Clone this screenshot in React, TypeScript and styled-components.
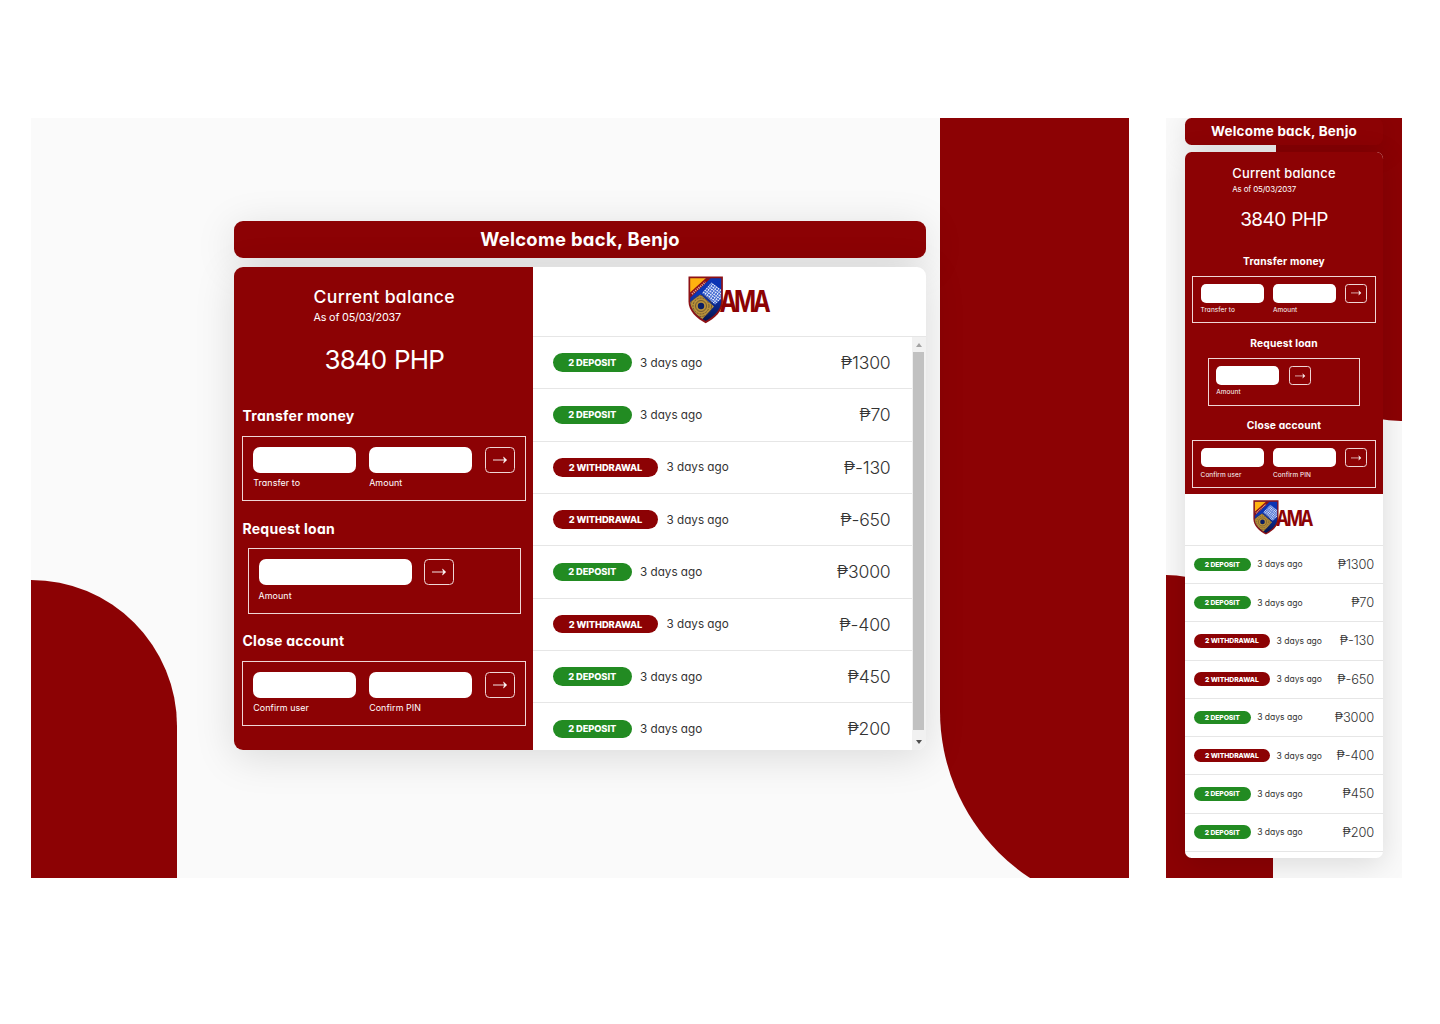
import React from "react";
import styled, { createGlobalStyle, css, ThemeProvider } from "styled-components";

const RED = "#8c0204";

const GlobalStyle = createGlobalStyle`
  * { box-sizing: border-box; }
  body {
    margin: 0;
    background: #fff;
    font-family: Inter, "Open Sans", "Liberation Sans", sans-serif;
    font-feature-settings: "cv11" 1;
  }
`;

interface Sizing {
  scale: number;
  compact: boolean;
}

type Themed = { theme: any };

/* Scales a desktop length to the device being shown. */
const u = (n: number) => ({ theme }: Themed) => `${+(n * (theme as Sizing).scale).toFixed(2)}px`;
const pick = (wide: string, compact: string) => ({ theme }: Themed) =>
  (theme as Sizing).compact ? compact : wide;

const Page = styled.main`
  display: flex;
  align-items: flex-start;
  width: 1440px;
  height: 1024px;
  padding: 118px 0 0 31px;
  gap: 37px;
  overflow: hidden;
`;

const Screen = styled.section`
  position: relative;
  flex: none;
  width: ${pick("1098px", "235.5px")};
  height: 760px;
  padding: ${pick("103px 0 0 203px", "0.4px 0 0 19px")};
  overflow: hidden;
  background: #fafafa;
`;

const CornerLeft = styled.div`
  position: absolute;
  left: 0;
  bottom: 0;
  width: ${pick("146px", "107px")};
  height: ${pick("298px", "303.5px")};
  border-top-right-radius: ${pick("146px", "107px")};
  background: ${RED};
`;

const CornerRight = styled.div`
  position: absolute;
  top: 0;
  left: ${pick("909.4px", "110px")};
  width: ${pick("400px", "250px")};
  height: ${pick("793px", "303px")};
  border-bottom-left-radius: ${pick("200px", "125px")};
  background: ${RED};
`;

const Dashboard = styled.div`
  position: relative;
  display: flex;
  flex-direction: column;
  gap: ${pick("8.5px", "6.5px")};
  width: ${pick("692px", "198px")};
`;

const raised = css`
  border-radius: ${u(9)};
  box-shadow: 0 ${u(7)} ${u(40)} rgba(0, 0, 0, 0.13);
`;

const Greeting = styled.header`
  ${raised}
  height: ${u(37)};
  background: ${RED};
  color: #fff;
  font-size: ${u(18.4)};
  font-weight: 700;
  letter-spacing: 0.017em;
  line-height: ${u(37)};
  text-align: center;
`;

const Card = styled.div`
  ${raised}
  position: relative;
  display: flex;
  flex-direction: ${pick("row", "column")};
  height: ${pick("483.5px", "706.5px")};
  overflow: hidden;
  background: #fff;
`;

const Panel = styled.div`
  display: flex;
  flex-direction: column;
  align-items: center;
  flex: none;
  width: ${pick("299px", "100%")};
  height: ${pick("100%", "342px")};
  padding: ${pick("20.5px 0 0 1.5px", "15px 0 0")};
  background: ${RED};
  color: #fff;
`;

const BalanceTitle = styled.h2`
  margin: 0;
  font-size: ${u(17.6)};
  font-weight: 500;
  letter-spacing: 0.018em;
  line-height: ${u(20)};
`;

const BalanceDate = styled.p`
  margin: ${u(3.5)} 0 0;
  font-size: ${u(10.8)};
  letter-spacing: -0.018em;
  line-height: ${u(14)};
`;

const BalanceValue = styled.p`
  margin: ${u(18.5)} 0 ${u(11.5)};
  font-size: ${u(26)};
  letter-spacing: -0.033em;
  word-spacing: 0.05em;
  line-height: ${u(34)};
`;

const Operation = styled.section`
  display: flex;
  flex-direction: column;
  align-items: center;
  align-self: stretch;
  padding: ${u(17.5)} ${u(7)} 0;
`;

const OperationTitle = styled.h3`
  align-self: ${pick("flex-start", "center")};
  margin: 0 0 ${u(9.5)};
  font-size: ${u(14)};
  font-weight: 700;
  letter-spacing: 0.018em;
  line-height: ${u(20)};
`;

const Form = styled.div<{ $single?: boolean }>`
  display: flex;
  align-items: flex-start;
  gap: ${u(12.9)};
  width: ${p => (p.$single ? pick("273.5px", "152px")(p) : pick("284px", "183.5px")(p))};
  height: ${u(65.5)};
  padding: ${u(10)};
  border: 1px solid #efd6d6;
`;

const Field = styled.label<{ $wide?: boolean }>`
  display: flex;
  flex-direction: column;
  gap: ${u(4.5)};
  width: ${p => (p.$wide ? pick("153px", "63px")(p) : pick("103px", "63px")(p))};
  font-size: ${u(8.9)};
  letter-spacing: 0.01em;
  line-height: ${u(12)};
`;

const Input = styled.input`
  width: 100%;
  height: ${u(26)};
  padding: 0;
  border: 0;
  border-radius: ${u(7)};
  background: #fff;
`;

const Submit = styled.button`
  display: grid;
  place-items: center;
  width: ${u(30)};
  height: ${u(26)};
  padding: 0;
  border: 1px solid #efd6d6;
  border-radius: ${u(4.5)};
  background: none;
  color: #fff;

  svg { width: ${u(14)}; height: ${u(8)}; overflow: visible; }
`;

const Activity = styled.div`
  display: flex;
  flex-direction: column;
  flex: 1;
  min-width: 0;
`;

const Brand = styled.div`
  display: flex;
  justify-content: center;
  flex: none;
  height: ${pick("70.5px", "51.8px")};
  padding-top: ${pick("9px", "6px")};
  border-bottom: 1px solid #e6e6e6;

  svg { width: ${u(84)}; height: ${u(48)}; }
`;

const Scroller = styled.div`
  display: flex;
  flex: 1;
  min-height: 0;
  overflow: hidden;
`;

const Rows = styled.ul`
  flex: 1;
  margin: 0;
  padding: 0;
  list-style: none;
`;

const Row = styled.li`
  display: flex;
  align-items: center;
  height: ${u(52.32)};
  padding: ${pick("0 21px 0 20px", "0 9px 0 8.5px")};
  border-bottom: 1px solid #e6e6e6;
  color: #333;
`;

const Badge = styled.span<{ $credit: boolean }>`
  display: flex;
  align-items: center;
  justify-content: center;
  width: ${p => u(p.$credit ? 78.5 : 105)(p)};
  height: ${u(18.5)};
  margin-right: ${u(8.5)};
  border-radius: ${u(10)};
  background: ${p => (p.$credit ? "#228b22" : RED)};
  color: #fff;
  font-size: ${u(9.3)};
  font-weight: 800;
  letter-spacing: -0.01em;
`;

const When = styled.span`
  font-size: ${u(11.7)};
`;

const Value = styled.span`
  margin-left: auto;
  font-size: ${u(17.6)};
  font-weight: 300;
  letter-spacing: -0.012em;
`;

const Track = styled.div`
  display: flex;
  flex-direction: column;
  align-items: center;
  width: 14.5px;
  padding-top: 6px;
  background: #f1f1f1;
`;

const Thumb = styled.div`
  flex: none;
  width: 11px;
  height: 378px;
  margin: 5px 0 10px;
  background: #c1c1c1;
`;

const Caret = styled.i<{ $down?: boolean }>`
  border: 3.5px solid transparent;
  ${p => (p.$down
    ? css`border-top: 4px solid #505050; border-bottom: 0;`
    : css`border-bottom: 4px solid #a3a3a3; border-top: 0;`)}
`;

const Arrow = () => (
  <svg viewBox="0 0 14 8" fill="none" stroke="currentColor">
    <path d="M0 4h12.500" strokeWidth="0.9" />
    <path d="M10.500 1 13.800 4l-3.300 3 1-3z" fill="currentColor" strokeWidth="0.5" />
  </svg>
);

const Logo = ({ id }: { id: string }) => (
  <svg viewBox="0 0 84 48" overflow="visible">
    <defs>
      <clipPath id={`${id}-shield`}>
        <path d="M2.200 2.200h31v23c0 8.500-7.500 15.500-15.500 19.800C9.700 40.700 2.200 33.700 2.200 25.200z" />
      </clipPath>
      <linearGradient id={`${id}-blue`} x1="0" y1="0" x2="0" y2="1">
        <stop offset="0.4" stopColor="#0b34b4" />
        <stop offset="1" stopColor="#07103e" />
      </linearGradient>
      <pattern id={`${id}-mesh`} width="2.400" height="2.400" patternUnits="userSpaceOnUse" patternTransform="rotate(38)">
        <rect width="2.400" height="2.400" fill="#3f66cf" />
        <rect width="1.500" height="1.500" fill="#eef3ff" />
      </pattern>
    </defs>
    <path d="M.5.5h34.400v25c0 9.500-8.200 17-17.200 21.700C8.700 42.500.5 35 .5 25.500z" fill="#8d1115" />
    <g clipPath={`url(#${id}-shield)`}>
      <path d="M0 0h36v48H0z" fill={`url(#${id}-blue)`} />
      <path d="M0 0h25L0 24z" fill="#8d1115" />
      <path d="M2 2h16L2 16.500z" fill="#ffb30f" />
      <path d="M4 18 17.500 6" stroke="#e0a795" strokeWidth="2" strokeDasharray="1.200 1" />
      <path d="m23.500 6.500 9.500 7v9.500l-6 5.500-13-11.500z" fill={`url(#${id}-mesh)`} />
      <path d="m12.500 18.500 13.500 12-12 13L1 32V27z" fill="#b8903a" />
      <g fill="none" stroke="#55432c" strokeWidth="0.7">
        <circle cx="13" cy="30" r="5.500" />
        <circle cx="13" cy="30" r="8" strokeDasharray="2 1" />
        <circle cx="13" cy="30" r="10.500" strokeDasharray="3 1" />
      </g>
      <circle cx="13" cy="30" r="3.200" fill="#0a1d63" />
    </g>
    <text transform="translate(31.500 35.500) scale(0.79 1)" fill={RED} fontSize="30" fontWeight="700" letterSpacing="-4">AMA</text>
  </svg>
);

const operations = [
  { title: "Transfer money", fields: ["Transfer to", "Amount"] },
  { title: "Request loan", fields: ["Amount"] },
  { title: "Close account", fields: ["Confirm user", "Confirm PIN"] },
];

const movements = [1300, 70, -130, -650, 3000, -400, 450, 200];

const Bank = ({ name, sizing }: { name: string; sizing: Sizing }) => (
  <ThemeProvider theme={sizing}>
    <Screen>
      <CornerLeft />
      <CornerRight />
      <Dashboard>
        <Greeting>Welcome back, Benjo</Greeting>
        <Card>
          <Panel>
            <div>
              <BalanceTitle>Current balance</BalanceTitle>
              <BalanceDate>As of 05/03/2037</BalanceDate>
            </div>
            <BalanceValue>3840 PHP</BalanceValue>
            {operations.map(({ title, fields }) => (
              <Operation key={title}>
                <OperationTitle>{title}</OperationTitle>
                <Form $single={fields.length === 1}>
                  {fields.map(label => (
                    <Field key={label} $wide={fields.length === 1}>
                      <Input />
                      {label}
                    </Field>
                  ))}
                  <Submit aria-label={title}><Arrow /></Submit>
                </Form>
              </Operation>
            ))}
          </Panel>
          <Activity>
            <Brand><Logo id={name} /></Brand>
            <Scroller>
              <Rows>
                {movements.map(amount => (
                  <Row key={amount}>
                    <Badge $credit={amount > 0}>2 {amount > 0 ? "DEPOSIT" : "WITHDRAWAL"}</Badge>
                    <When>3 days ago</When>
                    <Value>₱{amount}</Value>
                  </Row>
                ))}
              </Rows>
              {!sizing.compact && (
                <Track>
                  <Caret />
                  <Thumb />
                  <Caret $down />
                </Track>
              )}
            </Scroller>
          </Activity>
        </Card>
      </Dashboard>
    </Screen>
  </ThemeProvider>
);

export default function App() {
  return (
    <>
      <GlobalStyle />
      <Page>
        <Bank name="wide" sizing={{ scale: 1, compact: false }} />
        <Bank name="compact" sizing={{ scale: 0.7315, compact: true }} />
      </Page>
    </>
  );
}
